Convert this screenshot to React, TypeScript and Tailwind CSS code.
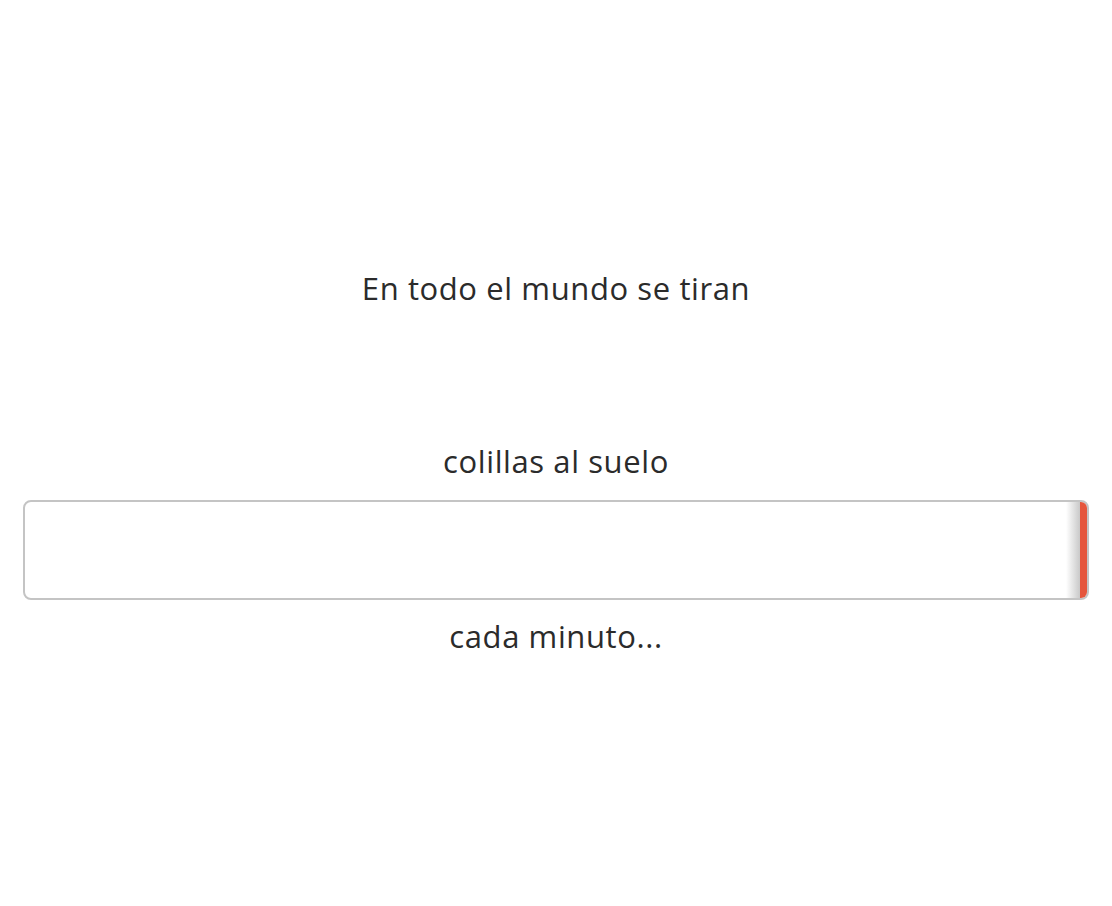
export default function App() {
  return (
    <div
      className="w-[1112px] h-[906px] bg-white overflow-hidden flex flex-col items-center text-[#2b2b2b]"
      style={{ fontFamily: '"Open Sans", "Noto Sans", sans-serif' }}
    >
      <div className="mt-[270px] h-[36px] leading-[36px] text-[31px] tracking-[0.6px]">En todo el mundo se tiran</div>
      <div className="mt-[137px] h-[36px] leading-[36px] text-[31px] tracking-[0.6px]">colillas al suelo</div>
      <div className="mt-[21px] w-[1066px] h-[100px] border-2 border-[#c4c4c4] rounded-[8px] flex justify-end overflow-hidden">
        <div className="w-[14px] h-full bg-gradient-to-r from-white to-[#c9c9c9]" />
        <div className="w-[7px] h-full bg-[#e5563d]" />
      </div>
      <div className="mt-[18px] h-[36px] leading-[36px] text-[31px] tracking-[0.6px]">cada minuto...</div>
    </div>
  );
}
